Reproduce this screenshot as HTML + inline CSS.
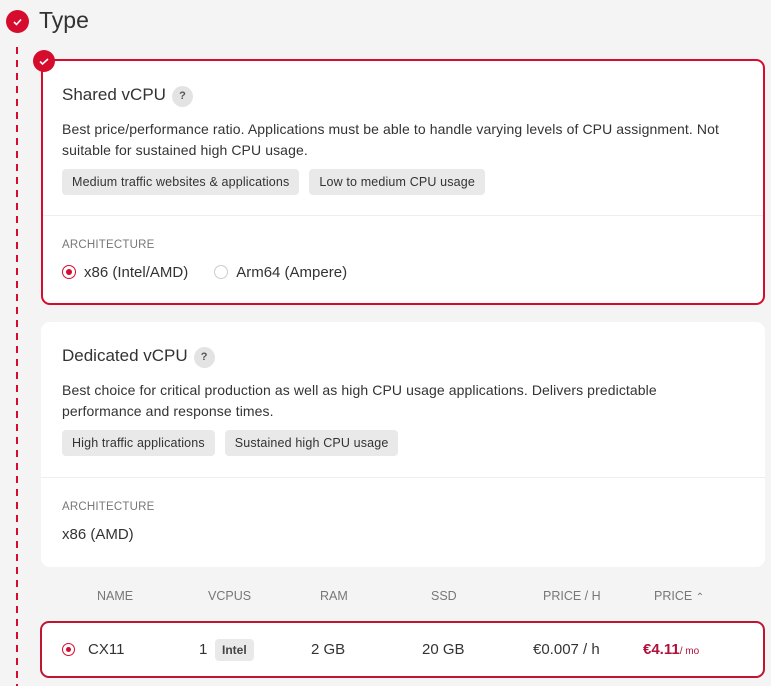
<!DOCTYPE html><html><head><style>
body{margin:0;width:771px;height:686px;background:#f4f4f4;font-family:"Liberation Sans",sans-serif;color:#333;position:relative;overflow:hidden}
.a{position:absolute}
.card{position:absolute;left:41px;width:724px;background:#fff;border-radius:9px;box-sizing:border-box}
.t{font-size:17px;color:#333}
.q{display:inline-block;width:21px;height:21px;border-radius:50%;background:#e3e3e3;font-size:11px;text-align:center;line-height:21px;font-weight:bold;color:#555;margin-left:6px;vertical-align:1px}
.d{font-size:14px;letter-spacing:.1px;line-height:21px;color:#333}
.tag{display:inline-block;background:#e9e9e9;border-radius:4px;font-size:12.5px;padding:0 10px;height:26px;line-height:26px;margin-right:10px;color:#333;letter-spacing:.15px}
.hd{font-size:11.5px;color:#777;letter-spacing:.2px}
.th{position:absolute;top:589px;font-size:12.5px;color:#777}
.td{position:absolute;top:641px;font-size:15px;color:#333}
</style></head><body>
<div class="a" style="left:6px;top:10px;width:23px;height:23px;border-radius:50%;background:#d50c2d"><svg width="23" height="23"><path d="M8 12l2.5 2.5L15 9.5" stroke="#fff" stroke-width="1.6" fill="none"/></svg></div>
<div class="a" style="left:39px;top:7px;font-size:23px;color:#333">Type</div>
<div class="a" style="left:16px;top:47px;width:2px;height:639px;background:repeating-linear-gradient(#d50c2d 0 7px,transparent 7px 13px)"></div>

<div class="card" style="top:59px;height:246px;border:2px solid #d50c2d">
<div class="a t" style="left:19px;top:24px">Shared vCPU<span class="q">?</span></div>
<div class="a d" style="left:19px;top:58px;width:690px">Best price/performance ratio. Applications must be able to handle varying levels of CPU assignment. Not<br>suitable for sustained high CPU usage.</div>
<div class="a" style="left:19px;top:108px"><span class="tag">Medium traffic websites &amp; applications</span><span class="tag">Low to medium CPU usage</span></div>
<div class="a" style="left:0;right:0;top:154px;border-top:1px solid #eee"></div>
<div class="a hd" style="left:19px;top:178px">ARCHITECTURE</div>
<div class="a" style="left:19px;top:203px;font-size:15px"><span style="display:inline-block;width:12px;height:12px;border:1.5px solid #d50c2d;border-radius:50%;vertical-align:-2px;margin-right:8px;position:relative"><span style="position:absolute;left:3px;top:3px;width:6px;height:6px;border-radius:50%;background:#d50c2d"></span></span>x86 (Intel/AMD)<span style="display:inline-block;width:12px;height:12px;border:1.5px solid #ccc;border-radius:50%;vertical-align:-2px;margin:0 8px 0 26px"></span>Arm64 (Ampere)</div>
</div>
<div class="a" style="left:33px;top:50px;width:22px;height:22px;border-radius:50%;background:#d50c2d"><svg width="22" height="22"><path d="M7 11.5l2.5 2.5L15 9" stroke="#fff" stroke-width="1.6" fill="none"/></svg></div>

<div class="card" style="top:322px;height:245px">
<div class="a t" style="left:21px;top:24px">Dedicated vCPU<span class="q">?</span></div>
<div class="a d" style="left:21px;top:58px;width:690px">Best choice for critical production as well as high CPU usage applications. Delivers predictable<br>performance and response times.</div>
<div class="a" style="left:21px;top:108px"><span class="tag">High traffic applications</span><span class="tag">Sustained high CPU usage</span></div>
<div class="a" style="left:0;right:0;top:155px;border-top:1px solid #eee"></div>
<div class="a hd" style="left:21px;top:179px">ARCHITECTURE</div>
<div class="a" style="left:21px;top:204px;font-size:15px">x86 (AMD)</div>
</div>

<div class="th" style="left:97px">NAME</div>
<div class="th" style="left:208px">VCPUS</div>
<div class="th" style="left:320px">RAM</div>
<div class="th" style="left:431px">SSD</div>
<div class="th" style="left:543px">PRICE / H</div>
<div class="th" style="left:654px">PRICE <span style="font-size:10px">&#8963;</span></div>

<div class="a" style="left:40px;top:621px;width:725px;height:57px;border:2px solid #c01433;border-radius:9px;box-sizing:border-box;background:#fff"></div>
<div class="a" style="left:62px;top:643px;width:11px;height:11px;border:1.5px solid #d50c2d;border-radius:50%"><div style="position:absolute;left:3px;top:3px;width:5px;height:5px;border-radius:50%;background:#d50c2d"></div></div>
<div class="td" style="left:88px">CX11</div>
<div class="td" style="left:199px">1</div>
<div class="a" style="left:215px;top:639px;background:#e9e9e9;border-radius:4px;font-size:12px;font-weight:bold;padding:0 7px;height:22px;line-height:22px;color:#444">Intel</div>
<div class="td" style="left:311px">2 GB</div>
<div class="td" style="left:422px">20 GB</div>
<div class="td" style="left:533px">€0.007 / h</div>
<div class="td" style="left:643px;color:#b0103a;font-weight:bold">€4.11<span style="font-size:10px;font-weight:normal">/ mo</span></div>
</body></html>
